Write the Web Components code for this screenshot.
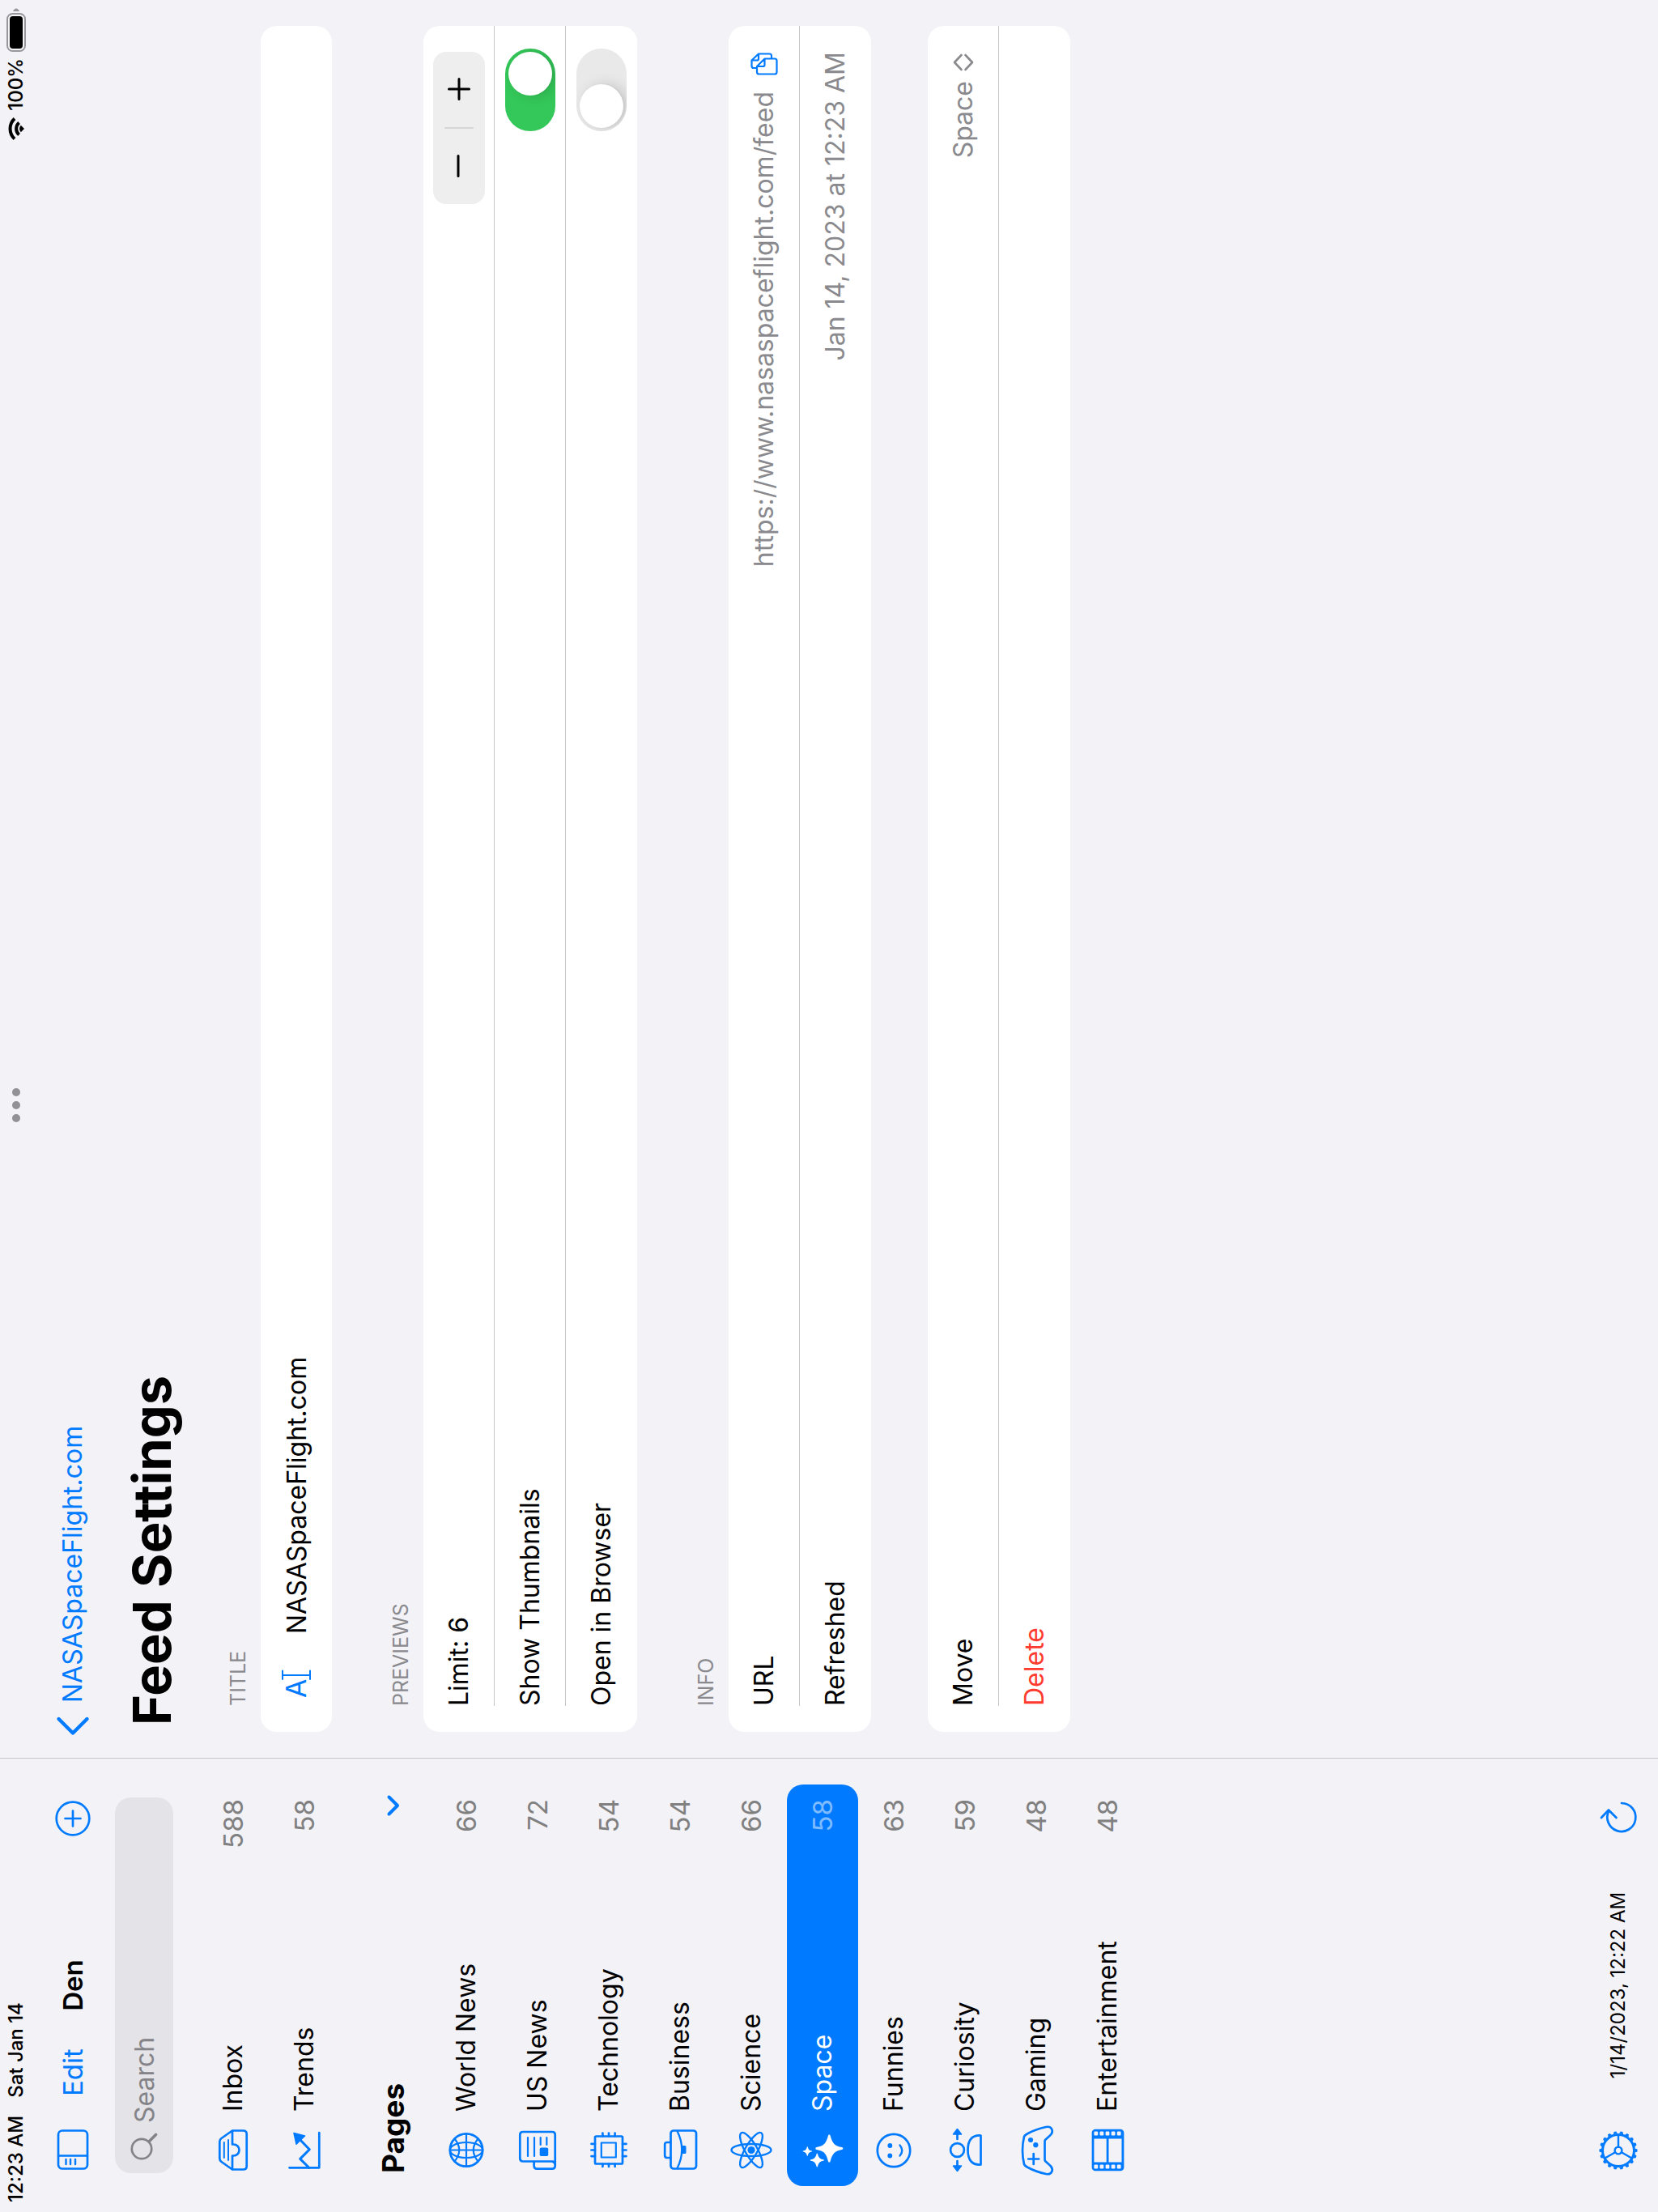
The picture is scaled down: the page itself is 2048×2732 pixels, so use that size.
<!DOCTYPE html>
<html lang="en">
<head>
<meta charset="utf-8">
<meta name="viewport" content="width=device-width, initial-scale=1">
<title>Den – Feed Settings</title>
<style>
  html, body { margin: 0; height: 100%; overflow: hidden; background: #f2f2f7; }
  body {
    --tint: #007aff; --bg: #f2f2f7; --line: #c6c6c8; --secondary: #8a8a8e; --count: #808080; --red: #ff3b30;
    --text: 32px; --numeral: 33px; --small: 24px; --caption: 25px;
    font: 400 32px/40px Inter, "Liberation Sans", sans-serif;
    color: #000;
  }
</style>
</head>
<body>
<den-app></den-app>
<script>
const RESET = `
  *, *::before { box-sizing: border-box; }
  button, input, select { font: inherit; color: inherit; background: none; border: 0; padding: 0; margin: 0; outline: 0; appearance: none; }
  button { display: block; cursor: pointer; }
  a { color: inherit; text-decoration: none; }
`;
function define(name, html, setup) {
  const template = document.createElement('template');
  template.innerHTML = html;
  customElements.define(name, class extends HTMLElement {
    constructor() {
      super();
      this.attachShadow({ mode: 'open' }).append(template.content.cloneNode(true));
    }
    connectedCallback() { if (setup) setup(this, this.shadowRoot); }
  });
}

/* Repeated icon parts */
const gearTeeth = Array.from({ length: 18 }, (_, i) => `<path d="M-2.6-20.5-1.4-23.5H1.4L2.6-20.5Z" fill="currentColor" stroke="none" transform="rotate(${i * 20})"/>`).join('');
const filmHoles = [5, 46].map(x => [0, 1, 2, 3, 4].map(i => `<rect x="${x + 1.6}" y="${13.4 + i * 7.1}" width="4.8" height="4.8" rx="1.2" fill="var(--bg)" stroke="none"/>`).join('')).join('');
const chipPins = [-7.6, 0, 7.6].map(d => `<path d="M${29.5 + d} 13V8.5M${29.5 + d} 47V51.5M12.5 ${30 + d}H9M46.5 ${30 + d}H50.5"/>`).join('');
const star = (x, y, r) => `<path transform="translate(${x} ${y}) scale(${r / 17})" fill="currentColor" stroke="none" d="M0-17C.9-17 1.2-16.400 1.4-15.500 3-7 6-4 15.500-1.400 16.600-1.100 17-.700 17 0 17 .7 16.600 1.100 15.500 1.400 6 4 3 7 1.400 15.500 1.200 16.400.9 17 0 17-.9 17-1.200 16.400-1.400 15.500-3 7-6 4-15.500 1.400-16.600 1.100-17 .7-17 0-17-.7-16.600-1.100-15.500-1.400-6-4-3-7-1.400-15.500-1.200-16.400-.9-17 0-17Z"/>`;

/* name: [width, height, markup] */
const ICONS = {
  sidebar: [50, 40, `<rect x="1.500" y="2" width="47" height="36" rx="5"/><path d="M17.500 2V38M7 11.500H13M7 17H13M7 23H13" stroke-width="2.400"/>`],
  add: [44, 44, `<circle cx="22" cy="22" r="20.300"/><path d="M22 12.500V31.500M12.500 22H31.500"/>`],
  search: [34, 34, `<circle cx="14" cy="14" r="12.200"/><path d="M23 23 31.500 31.500" stroke-width="3.600"/>`],
  inbox: [60, 60, `<path d="M5.500 29V42.500Q5.500 46.700 9.700 46.700H49.300Q53.500 46.700 53.500 42.500V29L44 15.500Q42.500 13.300 40 13.300H19Q16.500 13.300 15 15.500L5.500 29H22.500V30.500A7 7 0 0 0 36.500 30.500V29H53.500"/><path d="M20 18.800H39M17 24H42" stroke-width="2"/>`],
  trends: [60, 60, `<path d="M7.700 11.500V48.300H51"/><path d="M7.700 35.700 18.600 24.700 30.300 36.300 44 23" stroke-width="3"/><path d="M50.500 17 47 30.500 36.800 20Z" fill="currentColor" stroke-width="1.500"/>`],
  globe: [60, 60, `<circle cx="29.500" cy="30" r="20.200"/><ellipse cx="29.500" cy="30" rx="9.500" ry="20.200" stroke-width="2.200"/><path d="M9.500 30H49.500M29.500 10V50M15.500 15.500Q29.500 27 43.500 15.500M15.500 44.500Q29.500 33 43.500 44.500" stroke-width="2.200"/>`],
  news: [60, 60, `<path d="M15.500 49V12Q15.500 8.300 19.200 8.300H48.300Q52 8.300 52 12V48Q52 51.700 48.300 51.700H10Q6.300 51.700 6.300 48V29.300Q6.300 25.600 10 25.600H15.500M15.500 46.500Q15.500 51.700 10.500 51.700"/><path d="M22 18H45M22 26H45M36 33.700H45M36 41.300H45" stroke-width="2.200"/><rect x="22" y="32.700" width="10.500" height="10.500" rx="1.800" fill="currentColor" stroke="none"/>`],
  chip: [60, 60, `<rect x="12.500" y="13" width="34" height="34" rx="1.500"/><rect x="20.500" y="20.800" width="18" height="18" stroke-width="2.200"/>${chipPins}`],
  briefcase: [60, 60, `<rect x="6.500" y="18.500" width="47" height="31.500" rx="3.500"/><path d="M20 18V14Q20 11.200 22.800 11.200H36.200Q39 11.200 39 14V18"/><path d="M7 26.500Q30 38 53 26.500" stroke-width="2.300"/><rect x="25" y="31" width="10" height="6.500" rx="1.500" fill="currentColor" stroke="none"/>`],
  atom: [60, 60, `<g stroke-width="2.400"><ellipse cx="29.500" cy="30" rx="7.500" ry="24.500"/><ellipse cx="29.500" cy="30" rx="7.500" ry="24.500" transform="rotate(60 29.500 30)"/><ellipse cx="29.500" cy="30" rx="7.500" ry="24.500" transform="rotate(120 29.500 30)"/></g><circle cx="29.500" cy="30" r="4.600" fill="currentColor" stroke="none"/>`],
  sparkles: [60, 60, star(31.500, 38.300, 17) + star(17, 23.300, 8.500) + star(28, 11.300, 5.800)],
  smile: [60, 60, `<circle cx="29" cy="30" r="20.200"/><circle cx="22.500" cy="25.300" r="2.900" fill="currentColor" stroke="none"/><circle cx="35" cy="25.300" r="2.900" fill="currentColor" stroke="none"/><path d="M22.500 37.500Q29 43 35.500 37.500" stroke-width="2.400"/>`],
  person: [60, 60, `<circle cx="29.500" cy="20.500" r="8.400"/><path d="M11.500 49.500Q10.500 33.500 29.500 33.500T47.500 49.500Z"/><path d="M43 20.500H49M16 20.500H10"/><path d="M55.500 20.500 49 15.500V25.500ZM3.500 20.500 10 15.500V25.500Z" fill="currentColor" stroke-width="1.500"/>`],
  gamepad: [60, 60, `<path d="M12 15Q29 11 46 15 47.500 15.500 49 18 55 28 58 42C59.500 49.500 52 52.500 47 46.500L42.500 41.500Q41.500 40.500 40 40.500H18Q16.500 40.500 15.500 41.500L11 46.500C6 52.500-1.500 49.500 0 42Q3 28 9 18 10.500 15.500 12 15Z"/><path d="M12 26.700H25M18.500 20.200V33.200"/><circle cx="42" cy="23" r="3.100" fill="currentColor" stroke="none"/><circle cx="35.800" cy="29.300" r="3.100" fill="currentColor" stroke="none"/>`],
  film: [60, 60, `<rect x="5" y="12" width="49" height="37" rx="3" fill="currentColor"/><rect x="14.500" y="13.400" width="29" height="15.300" fill="var(--bg)" stroke="none"/><rect x="14.500" y="31.500" width="29" height="16" fill="var(--bg)" stroke="none"/>${filmHoles}`],
  gear: [48, 48, `<g transform="translate(24 24)"><circle r="19.500" stroke-width="3"/><circle r="4.400" stroke-width="2.400"/><path d="M4.500 0H19M-2.300 3.900-9.500 16.500M-2.300-3.900-9.500-16.500" stroke-width="2.400"/>${gearTeeth}</g>`],
  refresh: [40, 48, `<path d="M37 28A17.500 17.500 0 1 1 27.500 12.300" /><path d="M19 3 28.500 12 19 21.500"/>`],
  disclosure: [26, 16, `<path d="M2.500 2.500 13 13 23.500 2.500" stroke-width="4"/>`],
  back: [24, 40, `<path d="M21 2.500 3.500 20 21 37.500" stroke-width="4.400"/>`],
  ibeam: [36, 38, `<text x="0" y="31" font-size="34" font-weight="400" fill="currentColor" stroke="none">A</text><path d="M28 2.500V35.500M23 2H33.500M23 36H33.500" stroke-width="2"/>`],
  copy: [28, 34, `<g stroke-width="2.200"><path d="M9 7.500V4Q9 1.500 11.500 1.500H18.500L26.500 10V23.500Q26.500 26 24 26H21M18.500 1.500V8Q18.500 10 20.500 10H26.500"/><path d="M1.500 10.500Q1.500 8 4 8H11L20.500 17.500V30Q20.500 32.500 18 32.500H4Q1.500 32.500 1.500 30ZM11 8V15.500Q11 17.500 13 17.500H20.500"/></g>`],
  updown: [22, 26, `<path d="M2 10.500 11 2 20 10.500M2 15.500 11 24 20 15.500" stroke-width="2.600"/>`],
  plus: [28, 28, `<path d="M14 1.500V26.500M1.500 14H26.500" stroke-width="3"/>`],
  minus: [28, 28, `<path d="M1.500 13H26.500" stroke-width="3"/>`],
  wifi: [28, 20, `<path d="M1.500 8A17 17 0 0 1 26.500 8M6.500 13.500A10 10 0 0 1 21.500 13.500" stroke-width="4" stroke-linecap="butt"/><path d="M14 20 9.800 15.800A6 6 0 0 1 18.200 15.800Z" fill="currentColor" stroke="none"/>`],
  battery: [54, 24, `<rect x="1" y="1" width="46" height="22" rx="6.500" stroke="#98989c" stroke-width="2"/><rect x="4" y="4" width="40" height="16" rx="4" fill="currentColor" stroke="none"/><path d="M50 8Q53.500 9.500 53.500 12T50 16Z" fill="#98989c" stroke="none"/>`],
  dots: [42, 10, `<g fill="#919196" stroke="none"><circle cx="5" cy="5" r="5"/><circle cx="21" cy="5" r="5"/><circle cx="37" cy="5" r="5"/></g>`],
};
define('den-icon', `<style>:host{display:flex;flex:none}svg{display:block;overflow:visible}</style>`, (el, root) => {
  const icon = ICONS[el.getAttribute('name')];
  if (!icon || root.querySelector('svg')) return;
  const [w, h, body] = icon;
  const t = document.createElement('template');
  t.innerHTML = `<svg width="${w}" height="${h}" viewBox="0 0 ${w} ${h}" fill="none" stroke="currentColor" stroke-width="2.700" stroke-linecap="round" stroke-linejoin="round" aria-hidden="true">${body}</svg>`;
  root.append(t.content);
});

define('status-bar', `<style>${RESET}
  :host { display: grid; grid-template-columns: 1fr auto 1fr; align-items: center; height: 40px; padding: 0 10px 0 12px; font-size: var(--small); line-height: 30px; font-weight: 500; }
  div { display: flex; align-items: center; }
  .when { gap: 22px; }
  .power { justify-content: flex-end; gap: 8px; }
</style>
<div class="when"><span>12:23 AM</span><span>Sat Jan 14</span></div>
<den-icon name="dots"></den-icon>
<div class="power"><den-icon name="wifi"></den-icon><span>100%</span><den-icon name="battery"></den-icon></div>`);

define('side-row', `<style>${RESET}
  :host { display: block; }
  a { display: flex; align-items: center; height: 88px; padding: 0 18px 0 15px; border-radius: 20px; }
  den-icon { color: var(--tint); margin-right: 17px; }
  .label { flex: 1; }
  .count { font-size: var(--numeral); color: var(--count); }
  :host([selected]) a { background: var(--tint); color: #fff; }
  :host([selected]) den-icon { color: #fff; }
  :host([selected]) .count { color: rgb(255 255 255 / .5); }
</style>
<a href="#"><span class="label"><slot></slot></span><span class="count"></span></a>`, (el, root) => {
  root.querySelector('.count').textContent = el.getAttribute('count');
  const icon = document.createElement('den-icon');
  icon.setAttribute('name', el.getAttribute('icon'));
  root.querySelector('a').prepend(icon);
});

define('side-bar', `<style>${RESET}
  :host { display: flex; flex-direction: column; padding-top: 40px; border-right: 1px solid var(--line); }
  header, footer { display: grid; grid-template-columns: 1fr auto 1fr; align-items: center; padding: 0 52px; color: var(--tint); }
  header { height: 100px; }
  footer { height: 98px; font-size: var(--small); }
  header > div { display: flex; align-items: center; gap: 41px; }
  header > button, footer > button { justify-self: end; }
  footer > button:first-child { justify-self: start; }
  h1, h2 { margin: 0; color: #000; }
  h1 { font-size: var(--numeral); font-weight: 600; }
  header div button { font-size: var(--numeral); }
  footer span { color: #000; }
  .search { display: flex; align-items: center; gap: 12px; height: 72px; margin: 2px 48px 30px; padding: 0 16px; border-radius: 20px; background: #e3e3e8; color: #838388; }
  .search input { flex: 1; min-width: 0; height: 48px; }
  .search input::placeholder { color: #838388; opacity: 1; }
  nav { flex: 1; padding: 0 32px; }
  .pages { display: flex; align-items: center; justify-content: space-between; height: 112px; padding: 20px 13px 0 16px; }
  h2 { font-size: 37px; line-height: 48px; font-weight: 700; }
  .pages button { color: var(--tint); }
</style>
<header>
  <div><button aria-label="Toggle sidebar"><den-icon name="sidebar"></den-icon></button><button>Edit</button></div>
  <h1>Den</h1>
  <button aria-label="Add"><den-icon name="add"></den-icon></button>
</header>
<label class="search"><den-icon name="search"></den-icon><input type="search" placeholder="Search" aria-label="Search"></label>
<nav>
  <side-row icon="inbox" count="588">Inbox</side-row>
  <side-row icon="trends" count="58">Trends</side-row>
  <div class="pages"><h2>Pages</h2><button aria-label="Collapse pages"><den-icon name="disclosure"></den-icon></button></div>
  <side-row icon="globe" count="66">World News</side-row>
  <side-row icon="news" count="72">US News</side-row>
  <side-row icon="chip" count="54">Technology</side-row>
  <side-row icon="briefcase" count="54">Business</side-row>
  <side-row icon="atom" count="66">Science</side-row>
  <side-row icon="sparkles" count="58" selected>Space</side-row>
  <side-row icon="smile" count="63">Funnies</side-row>
  <side-row icon="person" count="59">Curiosity</side-row>
  <side-row icon="gamepad" count="48">Gaming</side-row>
  <side-row icon="film" count="48">Entertainment</side-row>
</nav>
<footer>
  <button aria-label="Settings"><den-icon name="gear"></den-icon></button>
  <span>1/14/2023, 12:22 AM</span>
  <button aria-label="Refresh"><den-icon name="refresh"></den-icon></button>
</footer>`);

define('form-section', `<style>${RESET}
  :host { display: block; }
  h2 { margin: 0 0 13px; padding: 0 32px; font-size: var(--caption); line-height: 30px; font-weight: 400; text-transform: uppercase; color: var(--secondary); }
  h2:empty { display: none; }
  .card { background: #fff; border-radius: 20px; overflow: hidden; }
</style>
<h2></h2><div class="card"><slot></slot></div>`, (el, root) => { root.querySelector('h2').textContent = el.getAttribute('heading') || ''; });

define('form-row', `<style>${RESET}
  :host { display: block; padding-left: 32px; }
  .row { display: flex; align-items: center; height: 88px; padding-right: 32px; border-bottom: 1px solid var(--line); }
  :host(:last-child) .row { border-bottom: 0; }
  ::slotted([slot=value]) { margin-left: auto; }
</style>
<div class="row"><slot></slot><slot name="value"></slot></div>`);

define('toggle-row', `<style>${RESET}
  :host { display: block; padding-left: 32px; }
  label { display: flex; align-items: center; justify-content: space-between; height: 88px; padding-right: 28px; border-bottom: 1px solid var(--line); }
  :host(:last-child) label { border-bottom: 0; }
  input { display: flex; width: 102px; height: 62px; padding: 4px; border-radius: 31px; background: #e9e9ea; overflow: hidden; }
  input::before { content: ""; width: 54px; height: 54px; border-radius: 50%; background: #fff; box-shadow: 0 6px 16px rgb(0 0 0 / .15), 0 1px 2px rgb(0 0 0 / .06); }
  input:checked { background: #34c759; justify-content: flex-end; }
</style>
<label><slot></slot><input type="checkbox" role="switch"></label>`, (el, root) => { root.querySelector('input').checked = el.hasAttribute('on'); });

define('step-control', `<style>${RESET}
  :host { display: flex; align-items: center; height: 64px; border-radius: 16px; background: #eee; }
  button { display: grid; place-items: center; width: 93px; height: 64px; }
  i { width: 2px; height: 36px; background: #d5d5d6; border-radius: 1px; }
</style>
<button aria-label="Decrease limit"><den-icon name="minus"></den-icon></button><i></i><button aria-label="Increase limit"><den-icon name="plus"></den-icon></button>`);

define('feed-settings', `<style>${RESET}
  :host { display: block; padding: 40px 32px 0; }
  .back { display: flex; align-items: center; gap: 17px; width: max-content; height: 100px; margin-left: -5px; color: var(--tint); }
  h1 { margin: 8px 0 51px; padding-left: 8px; font-size: 65px; line-height: 80px; font-weight: 700; }
  main { display: flex; flex-direction: column; gap: 70px; }
  .title { display: flex; flex: 1; align-items: center; gap: 43px; padding-left: 10px; color: var(--tint); }
  .title input { flex: 1; min-width: 0; height: 48px; color: #000; }
  .value { display: flex; align-items: center; color: var(--secondary); }
  .url { gap: 20px; padding-right: 1px; }
  .url button { color: var(--tint); }
  .move { gap: 12px; padding-right: 2px; }
  select { field-sizing: content; height: 48px; }
  .delete { color: var(--red); }
</style>
<a class="back" href="#"><den-icon name="back"></den-icon><span>NASASpaceFlight.com</span></a>
<h1>Feed Settings</h1>
<main>
  <form-section heading="Title">
    <form-row><label class="title"><den-icon name="ibeam"></den-icon><input type="text" value="NASASpaceFlight.com" aria-label="Title"></label></form-row>
  </form-section>
  <form-section heading="Previews">
    <form-row><span>Limit: 6</span><step-control slot="value"></step-control></form-row>
    <toggle-row on>Show Thumbnails</toggle-row>
    <toggle-row>Open in Browser</toggle-row>
  </form-section>
  <form-section heading="Info">
    <form-row><span>URL</span><span slot="value" class="value url"><span>https://www.nasaspaceflight.com/feed</span><button aria-label="Copy URL"><den-icon name="copy"></den-icon></button></span></form-row>
    <form-row><span>Refreshed</span><span slot="value" class="value">Jan 14, 2023 at 12:23 AM</span></form-row>
  </form-section>
  <form-section>
    <form-row><label for="page">Move</label><span slot="value" class="value move"><select id="page"><option>Space</option></select><den-icon name="updown"></den-icon></span></form-row>
    <form-row><button class="delete">Delete</button></form-row>
  </form-section>
</main>`);

/* A landscape tablet screen, turned a quarter turn to stand in a portrait window */
define('den-app', `<style>${RESET}
  :host { display: block; width: 100%; height: 100vh; overflow: hidden; contain: strict; background: var(--bg); }
  .screen { display: grid; width: 100vh; height: 100vw; grid-template: 40px minmax(0, 1fr) / 561px minmax(0, 1fr);
    transform-origin: 0 0; transform: rotate(-90deg) translateX(-100%); }
  status-bar { grid-area: 1 / 1 / 2 / 3; z-index: 1; }
  side-bar { grid-area: 1 / 1 / 3 / 2; }
  feed-settings { grid-area: 1 / 2 / 3 / 3; }
</style>
<div class="screen"><side-bar></side-bar><feed-settings></feed-settings><status-bar></status-bar></div>`);
</script>
</body>
</html>
